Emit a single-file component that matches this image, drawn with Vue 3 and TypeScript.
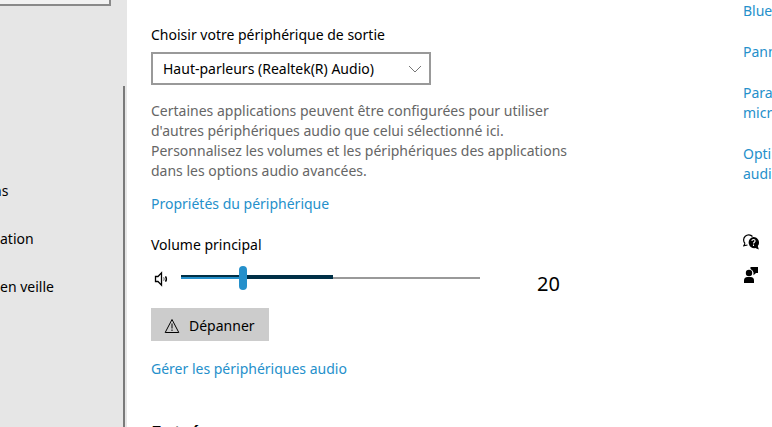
<script setup lang="ts">
import { computed, ref } from 'vue'

const device = ref('realtek')
const volume = ref(20)
const level = 51

const sliderVars = computed(() => ({
  '--value': `${volume.value}%`,
  '--level': `${level}%`,
}))

const related: string[][] = [['Blue'], ['Pann'], ['Para', 'micr'], ['Opti', 'audi']]
</script>

<template>
  <div class="settings">
    <nav class="sidebar" aria-label="Navigation">
      <input class="search" type="text" aria-label="Navigation" />
      <ul class="nav-list">
        <li><a class="nav-link clipped" href="#">ns</a></li>
        <li><a class="nav-link" href="#">ation</a></li>
        <li><a class="nav-link" href="#">en veille</a></li>
      </ul>
      <span class="scrollbar"></span>
    </nav>

    <main class="content">
      <label class="label" for="device">Choisir votre périphérique de sortie</label>
      <div class="select-box">
        <select id="device" v-model="device">
          <option value="realtek">Haut-parleurs (Realtek(R) Audio)</option>
        </select>
        <svg class="chevron" viewBox="0 0 14 8" aria-hidden="true">
          <path d="M1 1l6 6 6-6" fill="none" stroke="#777" stroke-width="1" />
        </svg>
      </div>
      <p class="hint">
        Certaines applications peuvent être configurées pour utiliser d'autres périphériques audio
        que celui sélectionné ici. Personnalisez les volumes et les périphériques des applications
        dans les options audio avancées.
      </p>
      <a class="link properties" href="#">Propriétés du périphérique</a>

      <label class="label volume-label" for="volume">Volume principal</label>
      <div class="volume-row">
        <svg class="speaker" viewBox="0 0 16 16" aria-hidden="true">
          <g fill="none" stroke="#000">
            <path d="M1.500 5.500h2.500l3.500-3.700v12.400l-3.500-3.700h-2.500z" stroke-width="1.300" />
            <path d="M9.700 6.300q1 1.700 0 3.400" stroke="#555" stroke-width="1" />
            <path d="M11.500 5.300q1.800 2.700 0 5.400" stroke-width="1.400" />
          </g>
        </svg>
        <input
          id="volume"
          v-model.number="volume"
          class="slider"
          type="range"
          min="0"
          max="100"
          :style="sliderVars"
        />
        <output class="value" for="volume">{{ volume }}</output>
      </div>

      <button class="troubleshoot" type="button">
        <svg class="warning" viewBox="0 0 16 16" aria-hidden="true">
          <path d="M8 1.500L14.800 14.500H1.200z" fill="none" stroke="#000" stroke-width="1" />
          <path d="M8 5.500v5M8 11.500v1.500" stroke="#000" stroke-width="1" />
        </svg>
        Dépanner
      </button>
      <a class="link manage" href="#">Gérer les périphériques audio</a>
      <h2 class="heading">Entrée</h2>
    </main>

    <aside class="related">
      <a v-for="lines in related" :key="lines[0]" class="link" href="#">
        <span v-for="line in lines" :key="line" class="line">{{ line }}</span>
      </a>
      <div class="support">
        <svg viewBox="0 0 16 16" aria-hidden="true">
          <path
            d="M2 9.500A4.800 4.800 0 1 1 9.500 2.500M2 9.500L.8 11.800l3.700-.8"
            fill="none"
            stroke="#000"
            stroke-width="1.200"
          />
          <path d="M10.300 3a5.600 5.600 0 0 1 4.500 9l1 3.500-3.500-1.400A5.600 5.600 0 1 1 10.300 3z" />
          <path
            d="M8.900 7c0-2 3.200-2 3.200 0 0 1.200-1.600 1.200-1.600 2.500M10.500 10.600v1.300"
            fill="none"
            stroke="#fff"
            stroke-width="1.100"
          />
        </svg>
        <svg viewBox="0 0 16 16" aria-hidden="true">
          <circle cx="6" cy="6" r="3.200" />
          <path d="M1 16v-2.500q0-3.500 3.500-3.500h3q3.500 0 3.500 3.500V16z" />
          <path d="M7.500 0h7.500v6h-2L10.500 8.300V5.500Q10 3 7.500 2z" />
        </svg>
      </div>
    </aside>
  </div>
</template>

<style>
body {
  background: #fff;
  overflow: hidden;
}
</style>

<style scoped>
.settings {
  display: grid;
  grid-template-columns: 127px minmax(0, 1fr) 29px;
  height: 100vh;
  overflow: hidden;
  color: #000;
  font: 14px/20px 'Noto Sans', 'Open Sans', sans-serif;
}

.sidebar {
  position: relative;
  overflow: hidden;
  background: #e6e6e6;
}

.search {
  display: block;
  box-sizing: border-box;
  width: 111px;
  height: 6px;
  padding: 0;
  border: solid #8a8a8a;
  border-width: 0 2px 2px 0;
  background: #f2f2f2;
}

.nav-list {
  display: grid;
  gap: 28px;
  margin: 0;
  padding: 175px 0 0;
  list-style: none;
}

.nav-link {
  display: block;
  color: #000;
  text-decoration: none;
}

.clipped {
  margin-left: -7px;
}

.scrollbar {
  position: absolute;
  top: 86px;
  right: 2px;
  bottom: 0;
  width: 2px;
  background: #7a7a7a;
}

.content {
  display: flex;
  flex-direction: column;
  align-items: flex-start;
  padding: 25px 24px 0;
}

.select-box {
  display: grid;
  align-items: center;
  width: 280px;
  margin-top: 7px;
}

.select-box > * {
  grid-area: 1 / 1;
}

select {
  appearance: none;
  width: 100%;
  height: 33px;
  padding: 0 32px 0 10px;
  border: 2px solid #999;
  border-radius: 0;
  background: #fff;
  color: #000;
  font: inherit;
}

.chevron {
  justify-self: end;
  width: 14px;
  height: 8px;
  margin-right: 9px;
  pointer-events: none;
}

.hint {
  max-width: 432px;
  margin: 16px 0 0;
  color: #666;
}

.link {
  color: #2590cb;
  text-decoration: none;
}

.properties {
  margin-top: 13px;
}

.volume-label {
  margin-top: 21px;
}

.volume-row {
  display: flex;
  align-items: center;
  margin-top: 11px;
}

.speaker {
  width: 16px;
  height: 16px;
  margin: 2px 11px 0 3px;
}

.slider {
  appearance: none;
  width: 299px;
  height: 24px;
  margin: 0;
  background:
    linear-gradient(#2590cb, #2590cb) 0 11px / var(--value) 2px no-repeat,
    linear-gradient(#003047, #003047) 0 9px / var(--level) 4px no-repeat,
    linear-gradient(#999, #999) 0 11px / 100% 2px no-repeat;
}

.slider::-webkit-slider-thumb {
  appearance: none;
  width: 8px;
  height: 24px;
  border-radius: 4px;
  background: #2590cb;
}

.value {
  margin: 12px 0 0 57px;
  font-size: 20px;
  line-height: 12px;
}

.troubleshoot {
  display: flex;
  align-items: center;
  gap: 9px;
  height: 33px;
  margin-top: 18px;
  padding: 2px 14px 0 13px;
  border: 0;
  background: #ccc;
  color: #000;
  font: inherit;
}

.warning {
  width: 16px;
  height: 16px;
}

.manage {
  margin-top: 18px;
}

.heading {
  margin: 40px 0 0;
  font-size: 19px;
  font-weight: 600;
  line-height: 28px;
}

.related {
  display: flex;
  flex-direction: column;
  gap: 21px;
  overflow: hidden;
  padding-top: 1px;
  white-space: nowrap;
}

.line {
  display: block;
}

.support {
  display: grid;
  gap: 17px;
  margin-top: 29px;
}

.support svg {
  width: 16px;
  height: 16px;
}
</style>
